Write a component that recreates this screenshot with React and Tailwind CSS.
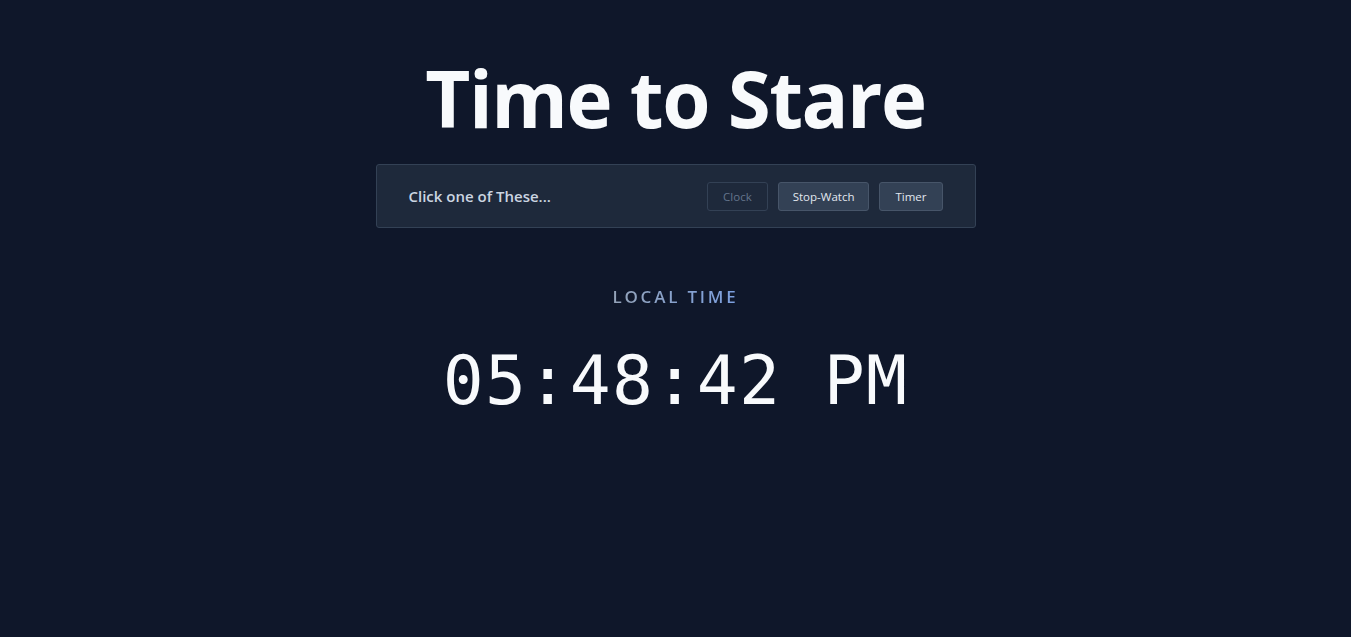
import React from 'react'

export default function App() {
  return (
    <div className="min-h-screen bg-[#0f172a] flex flex-col items-center pt-[49px] font-['Open_Sans','Noto_Sans',sans-serif]">
      <h1 className="text-[78px] leading-[98px] font-bold text-[#f8fafc] tracking-[-1.5px]">
        Time to Stare
      </h1>

      <div className="mt-[17px] w-[600px] h-[64px] bg-[#1e293b] border border-[#334155] rounded-[3px] flex items-center justify-between px-8">
        <span className="text-[15px] font-semibold text-[#cbd5e1] pt-[1px]">Click one of These...</span>
        <div className="flex items-center gap-[10px] pt-[1px]">
          <button
            disabled
            className="h-[29px] px-[15px] text-[11.5px] rounded-[3px] border border-[#334155] bg-[#1e293b] text-[#64748b]"
          >
            Clock
          </button>
          <button className="h-[29px] px-[14px] text-[11.5px] rounded-[3px] border border-[#475569] bg-[#334155] text-[#e2e8f0]">
            Stop-Watch
          </button>
          <button className="h-[29px] px-[15px] text-[11.5px] rounded-[3px] border border-[#475569] bg-[#334155] text-[#e2e8f0]">
            Timer
          </button>
        </div>
      </div>

      <div className="mt-[56px] text-[17px] font-semibold tracking-[2.8px] bg-gradient-to-r from-[#94a3b8] to-[#7b9fe0] bg-clip-text text-transparent">
        LOCAL TIME
      </div>

      <div className="mt-[31px] text-[68px] leading-[80px] tracking-[1.4px] text-[#f8fafc] font-['DejaVu_Sans_Mono',monospace]">
        05:48:42 PM
      </div>
    </div>
  )
}
